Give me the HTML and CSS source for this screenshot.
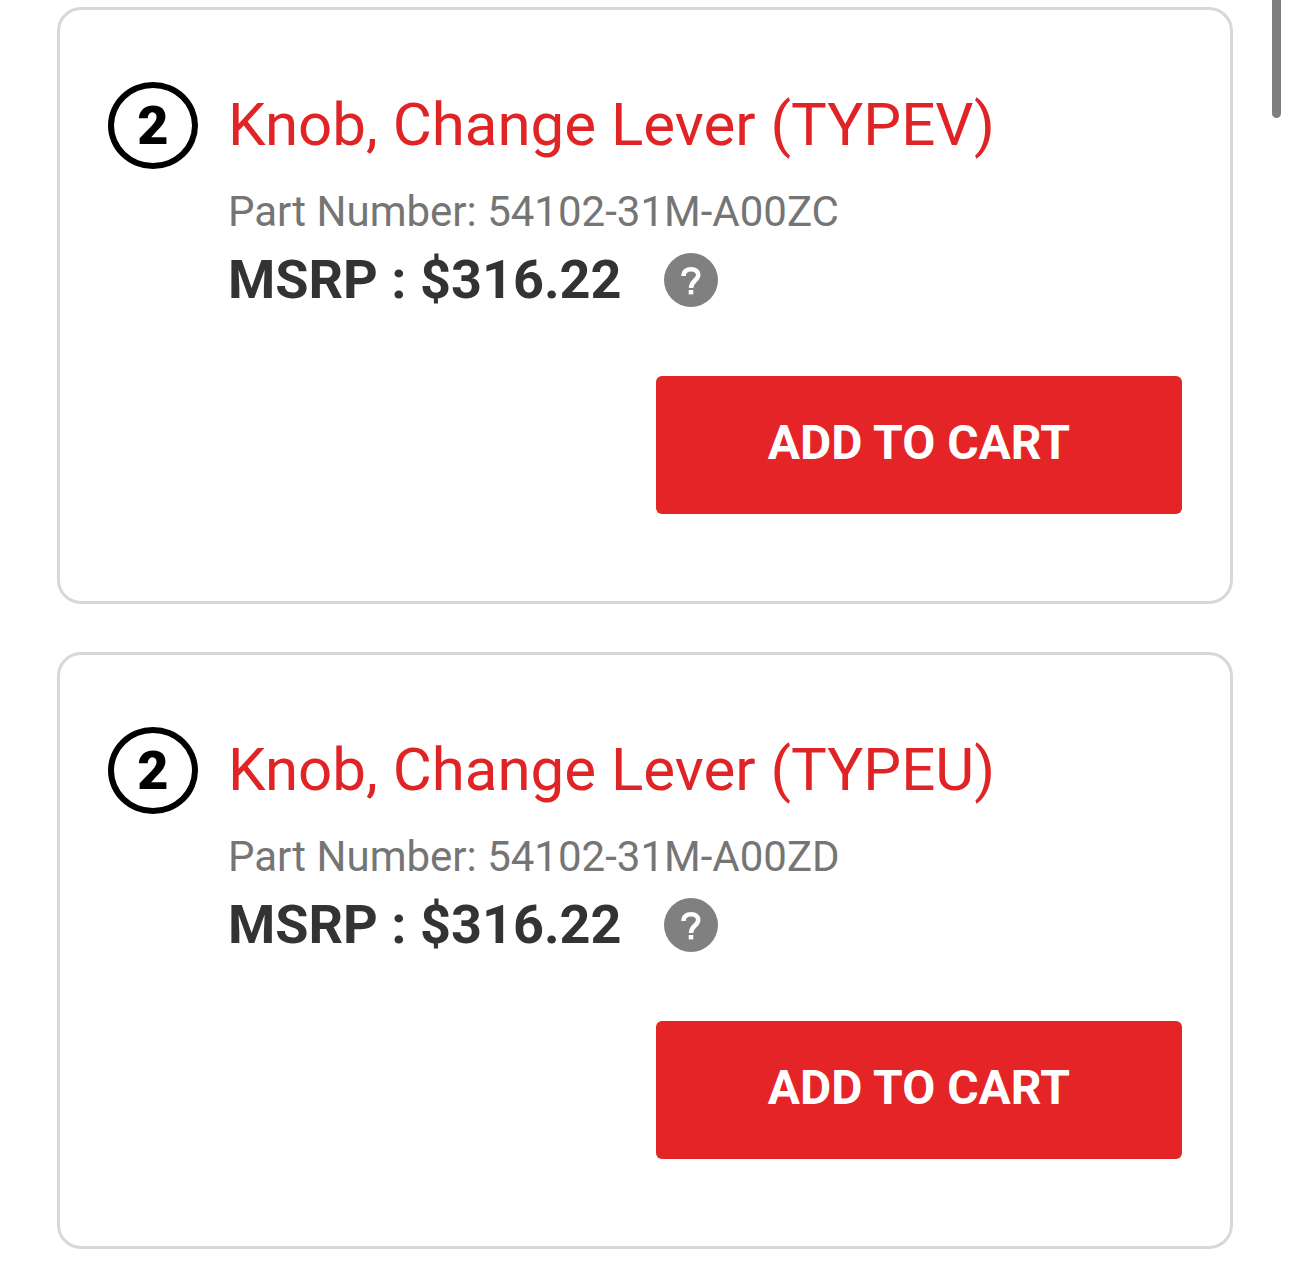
FILE: index.html
```html
<!DOCTYPE html>
<html lang="en">

<head>
    <meta charset="UTF-8">
    <meta name="viewport" content="width=device-width, initial-scale=1.0">
    <title>Parts List</title>
    <link rel="stylesheet" href="styles.css">
</head>

<body>
    <main class="parts-list">
        <article class="part-card">
            <span class="callout">2</span>
            <div class="part-info">
                <h2 class="part-title"><a href="#">Knob, Change Lever (TYPEV)</a></h2>
                <p class="part-number">Part Number: 54102-31M-A00ZC</p>
                <div class="part-price">
                    <span>MSRP : $316.22</span>
                    <button type="button" class="help" aria-label="About MSRP">
                        <svg viewBox="0 0 54 54" aria-hidden="true">
                            <path d="M19.5 23C19.5 18.5 22.5 16.2 27 16.2C31.5 16.2 34.2 18.6 34.2 22C34.2 27.5 27 27.8 27 35" />
                            <rect x="24.7" y="37" width="4.6" height="4.4" />
                        </svg>
                    </button>
                </div>
            </div>
            <button type="button" class="add-to-cart">ADD TO CART</button>
        </article>

        <article class="part-card">
            <span class="callout">2</span>
            <div class="part-info">
                <h2 class="part-title"><a href="#">Knob, Change Lever (TYPEU)</a></h2>
                <p class="part-number">Part Number: 54102-31M-A00ZD</p>
                <div class="part-price">
                    <span>MSRP : $316.22</span>
                    <button type="button" class="help" aria-label="About MSRP">
                        <svg viewBox="0 0 54 54" aria-hidden="true">
                            <path d="M19.5 23C19.5 18.5 22.5 16.2 27 16.2C31.5 16.2 34.2 18.6 34.2 22C34.2 27.5 27 27.8 27 35" />
                            <rect x="24.7" y="37" width="4.6" height="4.4" />
                        </svg>
                    </button>
                </div>
            </div>
            <button type="button" class="add-to-cart">ADD TO CART</button>
        </article>
    </main>
    <div class="scroll-thumb"></div>
</body>

</html>
```

FILE: styles.css
```css
* {
    box-sizing: border-box;
}

body {
    font-family: Roboto, "Liberation Sans", sans-serif;
    background: #fff;
    color: #333;
    margin: 0;
}

.parts-list {
    display: flex;
    flex-direction: column;
    gap: 48px;
    padding: 7px 57px 13px;
}

.part-card {
    display: grid;
    grid-template-columns: 90px 1fr;
    column-gap: 30px;
    padding: 72px 48px 87px;
    border: 3px solid #d8d8d8;
    border-radius: 24px;
}

.callout {
    display: flex;
    justify-content: center;
    align-items: center;
    height: 87px;
    border: 6px solid #000;
    border-radius: 50%;
    color: #000;
    font-size: 54px;
    font-weight: 900;
}

.part-title {
    margin: 0;
    font-size: 60px;
    font-weight: 400;
    line-height: 86px;
}

.part-title a {
    color: #e02426;
    text-decoration: none;
}

.part-number {
    margin: 14px 0 0;
    color: #757575;
    font-size: 42px;
    line-height: 60px;
}

.part-price {
    display: flex;
    align-items: center;
    gap: 42px;
    margin-top: 2px;
    font-size: 54px;
    font-weight: 700;
    line-height: 72px;
}

.help {
    width: 54px;
    height: 54px;
    padding: 0;
    border: none;
    border-radius: 50%;
    background: #808080;
    cursor: pointer;
}

.help svg {
    display: block;
    width: 100%;
}

.help path {
    fill: none;
    stroke: #fff;
    stroke-width: 4.5;
}

.help rect {
    fill: #fff;
}

.add-to-cart {
    grid-column: 1 / -1;
    justify-self: end;
    width: 49%;
    height: 138px;
    margin-top: 60px;
    padding: 0 0 6px;
    border: none;
    border-radius: 6px;
    background: #e52427;
    color: #fff;
    font-family: inherit;
    font-size: 48px;
    font-weight: 700;
    cursor: pointer;
}

.scroll-thumb {
    position: absolute;
    top: 0;
    right: 9px;
    width: 9px;
    height: 118px;
    border-radius: 0 0 5px 5px;
    background: #7f7f7f;
}
```
